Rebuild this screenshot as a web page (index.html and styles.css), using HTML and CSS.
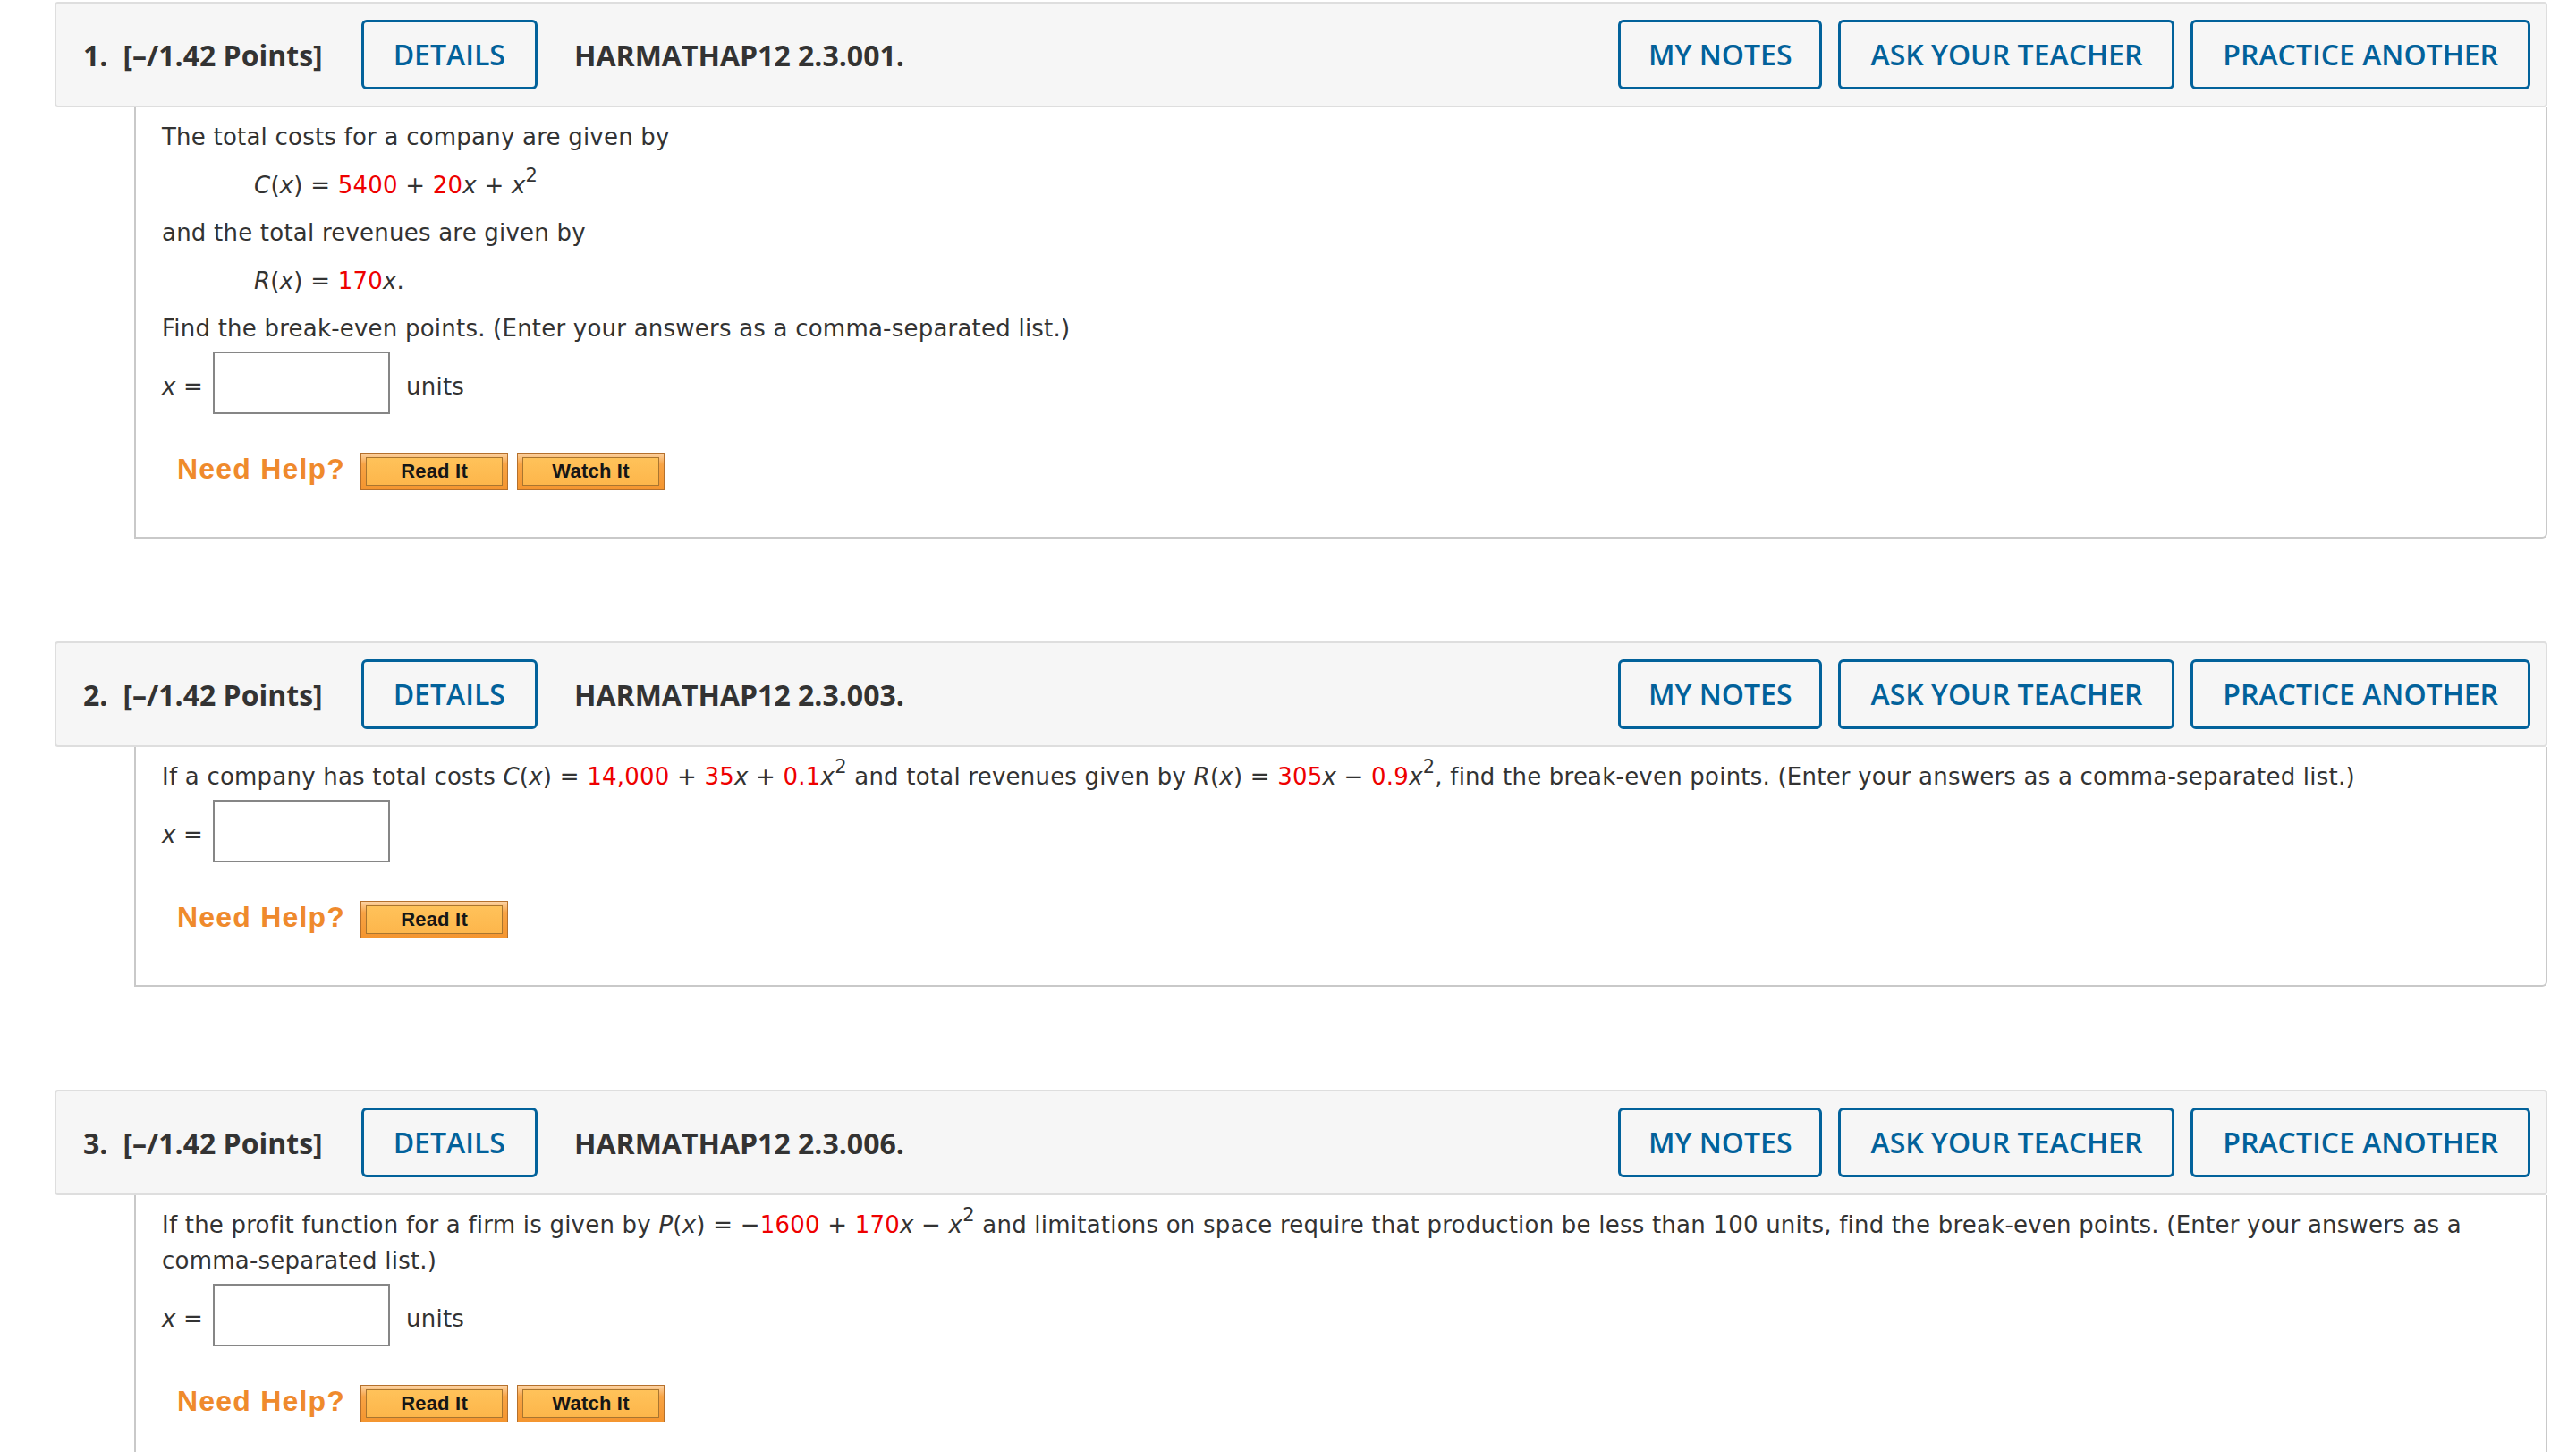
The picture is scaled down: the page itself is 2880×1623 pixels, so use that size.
FILE: index.html
```html
<!DOCTYPE html>
<html lang="en">
<head>
<meta charset="utf-8">
<title>Questions</title>
<link rel="stylesheet" href="styles.css">
</head>
<body>
<div class="page">

  <section class="question">
    <header class="q-head">
      <span class="q-num">1.</span>
      <span class="q-points">[–/1.42 Points]</span>
      <button class="q-btn details">DETAILS</button>
      <span class="q-code">HARMATHAP12 2.3.001.</span>
      <div class="q-actions">
        <button class="q-btn">MY NOTES</button>
        <button class="q-btn">ASK YOUR TEACHER</button>
        <button class="q-btn">PRACTICE ANOTHER</button>
      </div>
    </header>
    <div class="q-body">
      <p class="line">The total costs for a company are given by</p>
      <p class="line eq"><i>C</i>(<i>x</i>) = <span class="red">5400</span> + <span class="red">20</span><i>x</i> + <i>x</i><sup>2</sup></p>
      <p class="line">and the total revenues are given by</p>
      <p class="line eq"><i>R</i>(<i>x</i>) = <span class="red">170</span><i>x</i>.</p>
      <p class="line">Find the break-even points. (Enter your answers as a comma-separated list.)</p>
      <div class="answer">
        <span class="lbl"><i>x</i> =</span>
        <input class="ans-input" type="text">
        <span class="lbl unit">units</span>
      </div>
      <div class="help">
        <span class="help-title">Need Help?</span>
        <button class="help-btn"><span>Read It</span></button>
        <button class="help-btn"><span>Watch It</span></button>
      </div>
    </div>
  </section>

  <section class="question">
    <header class="q-head">
      <span class="q-num">2.</span>
      <span class="q-points">[–/1.42 Points]</span>
      <button class="q-btn details">DETAILS</button>
      <span class="q-code">HARMATHAP12 2.3.003.</span>
      <div class="q-actions">
        <button class="q-btn">MY NOTES</button>
        <button class="q-btn">ASK YOUR TEACHER</button>
        <button class="q-btn">PRACTICE ANOTHER</button>
      </div>
    </header>
    <div class="q-body">
      <p class="line">If a company has total costs <i>C</i>(<i>x</i>) = <span class="red">14,000</span> + <span class="red">35</span><i>x</i> + <span class="red">0.1</span><i>x</i><sup>2</sup> and total revenues given by <i>R</i>(<i>x</i>) = <span class="red">305</span><i>x</i> − <span class="red">0.9</span><i>x</i><sup>2</sup>, find the break-even points. (Enter your answers as a comma-separated list.)</p>
      <div class="answer">
        <span class="lbl"><i>x</i> =</span>
        <input class="ans-input" type="text">
      </div>
      <div class="help">
        <span class="help-title">Need Help?</span>
        <button class="help-btn"><span>Read It</span></button>
      </div>
    </div>
  </section>

  <section class="question">
    <header class="q-head">
      <span class="q-num">3.</span>
      <span class="q-points">[–/1.42 Points]</span>
      <button class="q-btn details">DETAILS</button>
      <span class="q-code">HARMATHAP12 2.3.006.</span>
      <div class="q-actions">
        <button class="q-btn">MY NOTES</button>
        <button class="q-btn">ASK YOUR TEACHER</button>
        <button class="q-btn">PRACTICE ANOTHER</button>
      </div>
    </header>
    <div class="q-body">
      <p class="line">If the profit function for a firm is given by <i>P</i>(<i>x</i>) = −<span class="red">1600</span> + <span class="red">170</span><i>x</i> − <i>x</i><sup>2</sup> and limitations on space require that production be less than 100 units, find the break-even points. (Enter your answers as a comma-separated list.)</p>
      <div class="answer">
        <span class="lbl"><i>x</i> =</span>
        <input class="ans-input" type="text">
        <span class="lbl unit">units</span>
      </div>
      <div class="help">
        <span class="help-title">Need Help?</span>
        <button class="help-btn"><span>Read It</span></button>
        <button class="help-btn"><span>Watch It</span></button>
      </div>
    </div>
  </section>

</div>
</body>
</html>
```
FILE: styles.css
```css
html, body {
  margin: 0;
  padding: 0;
  background: #ffffff;
}

.page {
  padding: 2px 32px 0 61px;
  font-family: "DejaVu Sans", Verdana, sans-serif;
  color: #333333;
}

.question {
  margin-bottom: 115px;
}

.q-head {
  box-sizing: border-box;
  height: 118px;
  display: flex;
  align-items: center;
  padding: 0 17px 0 30px;
  background: #f6f6f6;
  border: 2px solid #dedede;
  border-radius: 4px;
  font-family: "Open Sans", "DejaVu Sans", sans-serif;
  font-size: 32px;
  font-weight: 700;
  color: #333333;
}

.q-num {
  margin-right: 17px;
}

.q-points {
  margin-right: 43px;
}

.q-code {
  margin-left: 41px;
}

.q-actions {
  margin-left: auto;
  display: flex;
  gap: 18px;
}

.q-btn {
  box-sizing: border-box;
  height: 78px;
  padding: 0 33px;
  background: transparent;
  border: 3px solid #02629b;
  border-radius: 6px;
  color: #02629b;
  font-family: "Open Sans", "DejaVu Sans", sans-serif;
  font-size: 32px;
  font-weight: 600;
  line-height: 1;
  cursor: pointer;
}

.q-actions .q-btn:first-child {
  padding: 0 31px;
}

.q-body {
  margin-left: 89px;
  padding: 13px 28px 52px 29px;
  border: 2px solid #c9c9c9;
  border-top: none;
  border-bottom-right-radius: 6px;
  font-size: 26px;
  letter-spacing: 0.22px;
}

.line {
  margin: 0 0 13.6px 0;
  line-height: 40px;
}

.line:last-of-type {
  margin-bottom: 0;
}

.eq {
  padding-left: 103px;
}

.red {
  color: #ee0000;
}

sup {
  font-size: 21px;
  line-height: 0;
  vertical-align: 13px;
}

.answer {
  display: flex;
  align-items: center;
  margin-top: 6px;
}

.lbl {
  line-height: 40px;
  padding-top: 8px;
}

.ans-input {
  box-sizing: border-box;
  width: 198px;
  height: 70px;
  margin: 0 0 0 11px;
  border: 2px solid #868686;
  background: #ffffff;
  font-size: 26px;
}

.unit {
  margin-left: 18px;
}

.help {
  display: flex;
  align-items: flex-start;
  margin-top: 43px;
  height: 42px;
  letter-spacing: normal;
}

.help-title {
  margin-left: 17px;
  margin-right: 17px;
  font-family: "Liberation Sans", Arial, sans-serif;
  font-weight: 700;
  font-size: 32px;
  letter-spacing: 1.2px;
  line-height: 36px;
  color: #ef8a2c;
}

.help-btn {
  box-sizing: border-box;
  width: 165px;
  height: 42px;
  margin: 0 10px 0 0;
  padding: 4px 5px;
  border: 1px solid #b5702c;
  background: linear-gradient(#fcd2a2 0%, #f8a445 30%, #f4952f 100%);
  cursor: pointer;
}

.help-btn span {
  box-sizing: border-box;
  display: flex;
  height: 100%;
  align-items: center;
  justify-content: center;
  border: 1px solid #a9752f;
  background: linear-gradient(#ffc25a, #fdb64b);
  font-family: "Liberation Sans", Arial, sans-serif;
  font-weight: 700;
  font-size: 22px;
  letter-spacing: 0.2px;
  color: #161616;
}
```
